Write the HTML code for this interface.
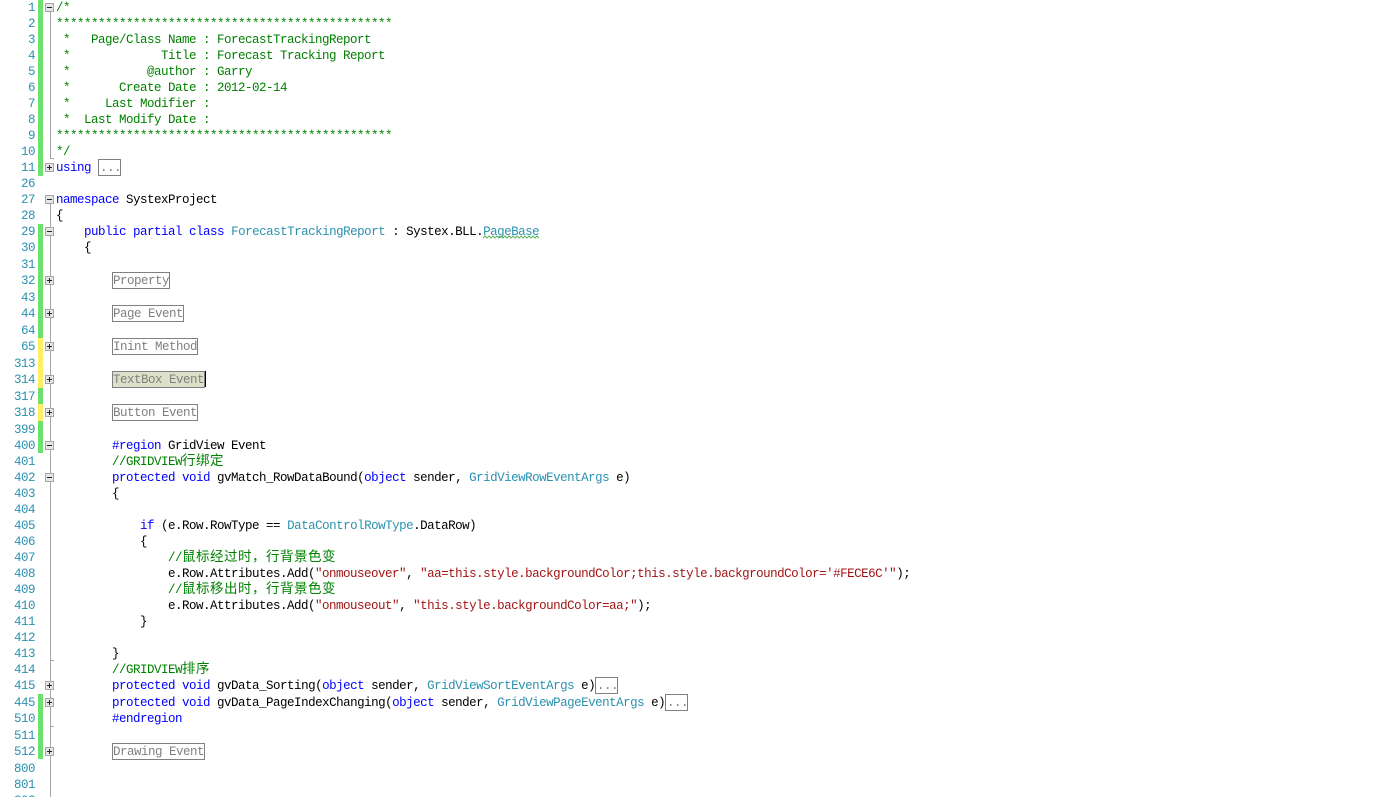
<!DOCTYPE html>
<html><head><meta charset="utf-8">
<style>
html,body{margin:0;padding:0;background:#fff;width:1398px;height:797px;overflow:hidden}
#r{position:relative;width:1398px;height:797px;overflow:hidden;font:12.5px/16px "Liberation Mono","Noto Sans CJK SC",monospace;letter-spacing:-.5px;color:#000}
.l{position:absolute;left:56px;height:16px;white-space:pre;margin-top:1px}
.n{position:absolute;left:0;width:35px;text-align:right;color:#2b91af;height:16px;margin-top:1px}
.c{color:#008000}.k{color:#0000ff}.t{color:#2b91af}.s{color:#a31515}
.z{font:13.5px/0 "Noto Sans CJK SC",sans-serif;letter-spacing:.5px}
.b{position:absolute;box-sizing:border-box;height:17px;border:1px solid #808080;color:#808080;line-height:17px;white-space:pre;background:#fff}
.g{position:absolute;left:38px;width:5px;background:#6ce26c}
.y{position:absolute;left:38px;width:5px;background:#ffee62}
.v{position:absolute;left:50px;width:1px;background:#a5a5a5}
.h{position:absolute;left:50px;width:4px;height:1px;background:#a5a5a5}
.f{position:absolute;left:45px;width:9px;height:9px;box-sizing:border-box;border:1px solid #a5a5a5;background:#e6e6e6}
.f:before{content:"";position:absolute;left:1px;top:3px;width:5px;height:1px;background:#222}
.p:after{content:"";position:absolute;left:3px;top:1px;width:1px;height:5px;background:#222}
</style></head><body><div id="r">
<div class="g" style="top:0;height:176px"></div>
<div class="g" style="top:224px;height:114px"></div>
<div class="y" style="top:338px;height:50px"></div>
<div class="g" style="top:388px;height:16px"></div>
<div class="y" style="top:404px;height:17px"></div>
<div class="g" style="top:421px;height:32px"></div>
<div class="g" style="top:694px;height:65px"></div>

<div class="v" style="top:12px;height:147px"></div>
<div class="h" style="top:158px"></div>
<div class="v" style="top:204px;height:593px"></div>
<div class="h" style="top:660px"></div>
<div class="h" style="top:726px"></div>

<div class="f" style="top:3px"></div>
<div class="f p" style="top:163px"></div>
<div class="f" style="top:195px"></div>
<div class="f" style="top:227px"></div>
<div class="f p" style="top:276px"></div>
<div class="f p" style="top:309px"></div>
<div class="f p" style="top:342px"></div>
<div class="f p" style="top:375px"></div>
<div class="f p" style="top:408px"></div>
<div class="f" style="top:441px"></div>
<div class="f" style="top:473px"></div>
<div class="f p" style="top:681px"></div>
<div class="f p" style="top:698px"></div>
<div class="f p" style="top:747px"></div>

<div class="n" style="top:-1px">1</div>
<div class="n" style="top:15px">2</div>
<div class="n" style="top:31px">3</div>
<div class="n" style="top:47px">4</div>
<div class="n" style="top:63px">5</div>
<div class="n" style="top:79px">6</div>
<div class="n" style="top:95px">7</div>
<div class="n" style="top:111px">8</div>
<div class="n" style="top:127px">9</div>
<div class="n" style="top:143px">10</div>
<div class="n" style="top:159px">11</div>
<div class="n" style="top:175px">26</div>
<div class="n" style="top:191px">27</div>
<div class="n" style="top:207px">28</div>
<div class="n" style="top:223px">29</div>
<div class="n" style="top:239px">30</div>
<div class="n" style="top:256px">31</div>
<div class="n" style="top:272px">32</div>
<div class="n" style="top:289px">43</div>
<div class="n" style="top:305px">44</div>
<div class="n" style="top:322px">64</div>
<div class="n" style="top:338px">65</div>
<div class="n" style="top:355px">313</div>
<div class="n" style="top:371px">314</div>
<div class="n" style="top:388px">317</div>
<div class="n" style="top:404px">318</div>
<div class="n" style="top:421px">399</div>
<div class="n" style="top:437px">400</div>
<div class="n" style="top:453px">401</div>
<div class="n" style="top:469px">402</div>
<div class="n" style="top:485px">403</div>
<div class="n" style="top:501px">404</div>
<div class="n" style="top:517px">405</div>
<div class="n" style="top:533px">406</div>
<div class="n" style="top:549px">407</div>
<div class="n" style="top:565px">408</div>
<div class="n" style="top:581px">409</div>
<div class="n" style="top:597px">410</div>
<div class="n" style="top:613px">411</div>
<div class="n" style="top:629px">412</div>
<div class="n" style="top:645px">413</div>
<div class="n" style="top:661px">414</div>
<div class="n" style="top:677px">415</div>
<div class="n" style="top:694px">445</div>
<div class="n" style="top:710px">510</div>
<div class="n" style="top:727px">511</div>
<div class="n" style="top:743px">512</div>
<div class="n" style="top:760px">800</div>
<div class="n" style="top:776px">801</div>
<div class="n" style="top:792px">802</div>

<div class="l c" style="top:-1px">/*</div>
<div class="l c" style="top:15px">************************************************</div>
<div class="l c" style="top:31px"> *   Page/Class Name : ForecastTrackingReport</div>
<div class="l c" style="top:47px"> *             Title : Forecast Tracking Report</div>
<div class="l c" style="top:63px"> *           @author : Garry</div>
<div class="l c" style="top:79px"> *       Create Date : 2012-02-14</div>
<div class="l c" style="top:95px"> *     Last Modifier :</div>
<div class="l c" style="top:111px"> *  Last Modify Date :</div>
<div class="l c" style="top:127px">************************************************</div>
<div class="l c" style="top:143px">*/</div>
<div class="l k" style="top:159px">using</div>
<div class="b" style="left:98px;top:159px;width:23px;padding-left:1px">...</div>
<div class="l" style="top:191px"><span class="k">namespace</span> SystexProject</div>
<div class="l" style="top:207px">{</div>
<div class="l" style="top:223px">    <span class="k">public partial class</span> <span class="t">ForecastTrackingReport</span> : Systex.BLL.<span class="t">PageBase</span></div>
<svg style="position:absolute;left:483px;top:235px" width="56" height="4"><path d="M0 3 L2 1 L4 3 L6 1 L8 3 L10 1 L12 3 L14 1 L16 3 L18 1 L20 3 L22 1 L24 3 L26 1 L28 3 L30 1 L32 3 L34 1 L36 3 L38 1 L40 3 L42 1 L44 3 L46 1 L48 3 L50 1 L52 3 L54 1 L56 3" fill="none" stroke="#5fb35f" stroke-width="1"/></svg>
<div class="l" style="top:239px">    {</div>
<div class="b" style="left:112px;top:272px;width:58px">Property</div>
<div class="b" style="left:112px;top:305px;width:72px">Page Event</div>
<div class="b" style="left:112px;top:338px;width:86px">Inint Method</div>
<div class="b" style="left:112px;top:371px;width:93px;background:#dedfc8">TextBox Event</div>
<div style="position:absolute;left:205px;top:371px;width:1px;height:16px;background:#000"></div>
<div class="b" style="left:112px;top:404px;width:86px">Button Event</div>
<div class="l" style="top:437px">        <span class="k">#region</span> GridView Event</div>
<div class="l c" style="top:453px">        //GRIDVIEW<span class="z">行绑定</span></div>
<div class="l" style="top:469px">        <span class="k">protected void</span> gvMatch_RowDataBound(<span class="k">object</span> sender, <span class="t">GridViewRowEventArgs</span> e)</div>
<div class="l" style="top:485px">        {</div>
<div class="l" style="top:517px">            <span class="k">if</span> (e.Row.RowType == <span class="t">DataControlRowType</span>.DataRow)</div>
<div class="l" style="top:533px">            {</div>
<div class="l c" style="top:549px">                //<span class="z">鼠标经过时，行背景色变</span></div>
<div class="l" style="top:565px">                e.Row.Attributes.Add(<span class="s">"onmouseover"</span>, <span class="s">"aa=this.style.backgroundColor;this.style.backgroundColor='#FECE6C'"</span>);</div>
<div class="l c" style="top:581px">                //<span class="z">鼠标移出时，行背景色变</span></div>
<div class="l" style="top:597px">                e.Row.Attributes.Add(<span class="s">"onmouseout"</span>, <span class="s">"this.style.backgroundColor=aa;"</span>);</div>
<div class="l" style="top:613px">            }</div>
<div class="l" style="top:645px">        }</div>
<div class="l c" style="top:661px">        //GRIDVIEW<span class="z">排序</span></div>
<div class="l" style="top:677px">        <span class="k">protected void</span> gvData_Sorting(<span class="k">object</span> sender, <span class="t">GridViewSortEventArgs</span> e)</div>
<div class="b" style="left:595px;top:677px;width:23px;padding-left:1px">...</div>
<div class="l" style="top:694px">        <span class="k">protected void</span> gvData_PageIndexChanging(<span class="k">object</span> sender, <span class="t">GridViewPageEventArgs</span> e)</div>
<div class="b" style="left:665px;top:694px;width:23px;padding-left:1px">...</div>
<div class="l k" style="top:710px">        #endregion</div>
<div class="b" style="left:112px;top:743px;width:93px">Drawing Event</div>
</div></body></html>
